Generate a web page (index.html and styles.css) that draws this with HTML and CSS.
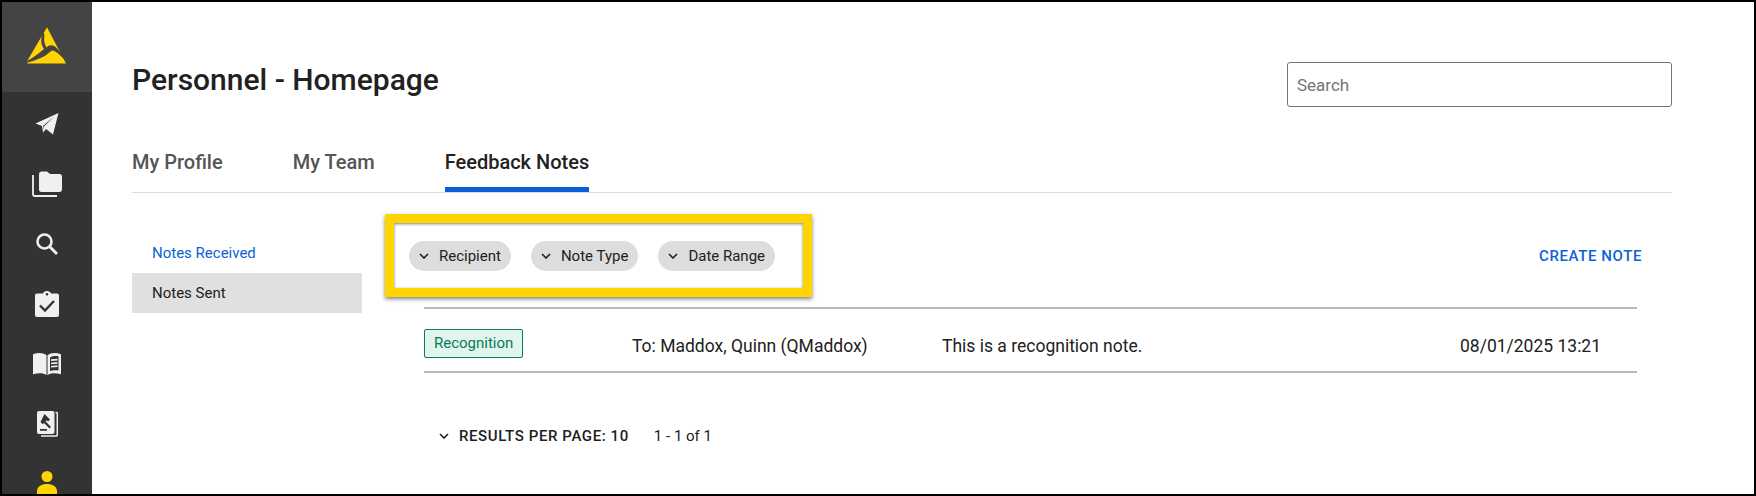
FILE: index.html
```html
<!DOCTYPE html>
<html lang="en">
<head>
  <meta charset="UTF-8">
  <meta name="viewport" content="width=device-width, initial-scale=1.0">
  <title>Personnel - Homepage</title>
  <link rel="stylesheet" href="styles.css">
</head>
<body>
  <div class="app-frame">
    <nav class="sidebar">
      <div class="sidebar-logo">
        <svg width="44" height="42" viewBox="0 0 44 42">
          <path fill="#ffd400" d="M22 1.300 41 37.500 2.500 37.500 2.200 35Z"/>
          <path fill="#444" d="M18 6C15.500 12 15.500 18 19 23C14 27.500 8 31.500 1.500 35.500L2.500 36.500C10 34.500 17 32 22 28.500C24 26.500 26 25 27.500 24.500C31 25 35 29 40 34L40 32.500C36 27 32 21.500 29 20C26 18.500 23.500 19.500 21.500 21.500C19.500 18.500 18.500 14 19.500 9Z"/>
        </svg>
      </div>
      <a class="side-item">
        <svg width="24" height="22" viewBox="0 0 24 22">
          <path fill="#f0f0f0" fill-rule="evenodd" d="M23.500 0 .5 10.500 7 13 8 19.500 11 16 18 21.500ZM19 3.500 9 13.500 8.500 17 8.300 12.800Z"/>
        </svg>
      </a>
      <a class="side-item">
        <svg width="30" height="26" viewBox="0 0 30 26">
          <path fill="#f0f0f0" d="M7 3.500C7 1.800 8 .5 9.500 .5H15L18 3H27.500C29 3 30 4 30 5.500V18.500C30 20 29 21 27.500 21H9.500C8 21 7 20 7 18.500Z"/>
          <path fill="none" stroke="#f0f0f0" stroke-width="1.800" d="M1 4V23.500C1 24.300 1.600 25 2.500 25H25"/>
        </svg>
      </a>
      <a class="side-item">
        <svg width="22" height="22" viewBox="0 0 22 22">
          <circle cx="8.500" cy="8.500" r="7" fill="none" stroke="#f0f0f0" stroke-width="2.600"/>
          <path stroke="#f0f0f0" stroke-width="2.800" d="M13.500 13.500 21 21"/>
        </svg>
      </a>
      <a class="side-item">
        <svg width="24" height="26" viewBox="0 0 24 26">
          <path fill="#f0f0f0" fill-rule="evenodd" d="M2 2.500H8C8.500 1 10 0 12 0S15.500 1 16 2.500H22C23.200 2.500 24 3.300 24 4.500V24C24 25.200 23.200 26 22 26H2C.800 26 0 25.200 0 24V4.500C0 3.300 .800 2.500 2 2.500ZM12 2A1.300 1.300 0 1 0 12 4.600 1.300 1.300 0 1 0 12 2Z"/>
          <path fill="none" stroke="#333" stroke-width="2.400" d="M5 14.500 10 19.500 19 10"/>
        </svg>
      </a>
      <a class="side-item">
        <svg width="28" height="24" viewBox="0 0 28 22" preserveAspectRatio="none">
          <path fill="#f0f0f0" d="M0 2C5 .5 10 .5 13.500 3V21C10 19 5 19 0 20.500Z"/>
          <path fill="#f0f0f0" fill-rule="evenodd" d="M14.500 3C18 .5 23 .5 28 2V20.500C23 19 18 19 14.500 21ZM17 5V17.500C19.500 16.500 22.500 16.500 25.500 17V4C22.500 3.500 19.500 3.800 17 5Z"/>
          <path stroke="#f0f0f0" stroke-width="1.500" d="M18 7.500 24.500 7M18 10.500 24.500 10M18 13.500 24.500 13"/>
        </svg>
      </a>
      <a class="side-item">
        <svg width="21" height="26" viewBox="0 0 21 26">
          <path fill="none" stroke="#f0f0f0" stroke-width="1.500" d="M18.500 1.500H19.500C20 1.500 20.300 2 20.300 2.500V23.500C20.300 24.500 19.800 25 19 25H4"/>
          <rect width="17.500" height="23" rx="2" fill="#f0f0f0"/>
          <path fill="#333" d="M7.500 3 13 8.500 11 10.500 9.800 9.300 8.700 10.400 14 16 12.500 17.500 7 12 5.700 13.200 3.500 11ZM3 18H10V19.800H3Z"/>
        </svg>
      </a>
      <a class="side-item">
        <svg width="20" height="26" viewBox="0 0 20 26">
          <circle cx="10" cy="5.500" r="5.500" fill="#ffd400"/>
          <path fill="#ffd400" d="M0 20C0 15.500 5 13 10 13S20 15.500 20 20V26H0Z"/>
        </svg>
      </a>
    </nav>

    <main class="content">
      <header class="page-head">
        <h1>Personnel - Homepage</h1>
        <input class="search-box" type="text" placeholder="Search">
      </header>

      <div class="tabs">
        <a class="tab">My Profile</a>
        <a class="tab">My Team</a>
        <a class="tab active">Feedback Notes</a>
      </div>

      <div class="notes-layout">
        <aside class="notes-nav">
          <a class="notes-link current">Notes Received</a>
          <a class="notes-link selected">Notes Sent</a>
        </aside>

        <section class="notes-main">
          <div class="toolbar">
            <div class="filter-box">
              <button class="chip"><svg class="chev" viewBox="0 0 10 6"><path d="M1 1 5 5 9 1"/></svg>Recipient</button>
              <button class="chip"><svg class="chev" viewBox="0 0 10 6"><path d="M1 1 5 5 9 1"/></svg>Note Type</button>
              <button class="chip"><svg class="chev" viewBox="0 0 10 6"><path d="M1 1 5 5 9 1"/></svg>Date Range</button>
            </div>
            <a class="create-note">CREATE NOTE</a>
          </div>

          <div class="note-row">
            <span class="badge">Recognition</span>
            <span>To: Maddox, Quinn (QMaddox)</span>
            <span>This is a recognition note.</span>
            <span>08/01/2025 13:21</span>
          </div>

          <div class="pager">
            <svg class="chev" viewBox="0 0 10 6"><path d="M1 1 5 5 9 1"/></svg>
            <span class="per-page">RESULTS PER PAGE: 10</span>
            <span class="page-count">1 - 1 of 1</span>
          </div>
        </section>
      </div>
    </main>
  </div>
</body>
</html>
```

FILE: styles.css
```css
body, html {
  margin: 0;
  padding: 0;
  height: 100%;
  overflow: hidden;
  font-family: Roboto, "Liberation Sans", sans-serif;
  color: #212121;
  background-color: #fff;
}

.app-frame {
  display: flex;
  height: 496px;
  box-sizing: border-box;
  border: 2px solid #000;
  overflow: hidden;
}

.sidebar {
  flex: none;
  width: 90px;
  height: 100%;
  background-color: #333;
  overflow: hidden;
}

.sidebar-logo {
  height: 90px;
  background-color: #444;
  display: flex;
  justify-content: center;
  align-items: center;
}

.side-item {
  height: 60px;
  display: flex;
  justify-content: center;
  align-items: center;
}

.sidebar-logo + .side-item {
  margin-top: 2px;
}

.content {
  flex: 1;
  padding: 0 82px 0 40px;
}

.page-head {
  display: flex;
  justify-content: space-between;
  align-items: flex-start;
  padding-top: 60px;
}

.page-head h1 {
  margin: 0;
  font-size: 30px;
  font-weight: 500;
  line-height: 36px;
}

.search-box {
  width: 385px;
  height: 45px;
  box-sizing: border-box;
  padding: 0 9px;
  border: 1px solid #757575;
  border-radius: 3px;
  font-family: inherit;
  font-size: 17px;
}

.search-box::placeholder {
  color: #757575;
  opacity: 1;
}

.tabs {
  display: flex;
  gap: 70px;
  margin-top: 32px;
  border-bottom: 1px solid #ddd;
}

.tab {
  height: 53px;
  line-height: 46px;
  font-size: 20px;
  font-weight: 500;
  color: #555;
  box-sizing: border-box;
}

.tab.active {
  color: #212121;
  border-bottom: 5px solid #0b5ed7;
}

.notes-layout {
  display: flex;
}

.notes-nav {
  flex: none;
  width: 230px;
  padding-top: 40px;
}

.notes-link {
  display: block;
  height: 40px;
  line-height: 40px;
  padding-left: 20px;
  font-size: 15px;
}

.notes-link.current {
  color: #0b63d6;
}

.notes-link.selected {
  background-color: #e0e0e0;
}

.notes-main {
  flex: 1;
  margin-left: 23px;
  padding-top: 21px;
}

.toolbar {
  display: flex;
  justify-content: space-between;
  align-items: center;
  padding-right: 30px;
}

.filter-box {
  display: flex;
  gap: 20px;
  width: 427px;
  height: 83px;
  box-sizing: border-box;
  padding: 18px 15px;
  border: 9px solid #ffd400;
  box-shadow: 0 2px 4px rgba(0, 0, 0, 0.5), inset 0 1px 3px rgba(0, 0, 0, 0.5);
}

.chip {
  display: flex;
  align-items: center;
  gap: 10px;
  height: 30px;
  padding: 0 10px;
  border: none;
  border-radius: 15px;
  background-color: #ddd;
  color: #212121;
  font-family: inherit;
  font-size: 15px;
}

.chev {
  flex: none;
  width: 10px;
  height: 6px;
  fill: none;
  stroke: #212121;
  stroke-width: 1.6;
}

.create-note {
  font-size: 15px;
  font-weight: 500;
  letter-spacing: 0.6px;
  color: #0b63d6;
}

.note-row {
  display: grid;
  grid-template-columns: 208px 310px 518px auto;
  align-items: center;
  height: 66px;
  box-sizing: border-box;
  margin: 10px 35px 0 39px;
  padding-top: 12px;
  border-top: 2px solid #bbb;
  border-bottom: 2px solid #bbb;
  font-size: 17.5px;
}

.badge {
  justify-self: start;
  margin-bottom: 6px;
  padding: 0 9px;
  height: 29px;
  line-height: 27px;
  box-sizing: border-box;
  border: 1px solid #0a7a5c;
  border-radius: 2px;
  background-color: #e0f5ec;
  color: #0a7a5c;
  font-size: 15px;
}

.pager {
  display: flex;
  align-items: center;
  margin: 54px 0 0 54px;
  font-size: 15px;
}

.per-page {
  margin-left: 10px;
  font-weight: 500;
  letter-spacing: 0.6px;
}

.page-count {
  margin-left: 25px;
}
```
